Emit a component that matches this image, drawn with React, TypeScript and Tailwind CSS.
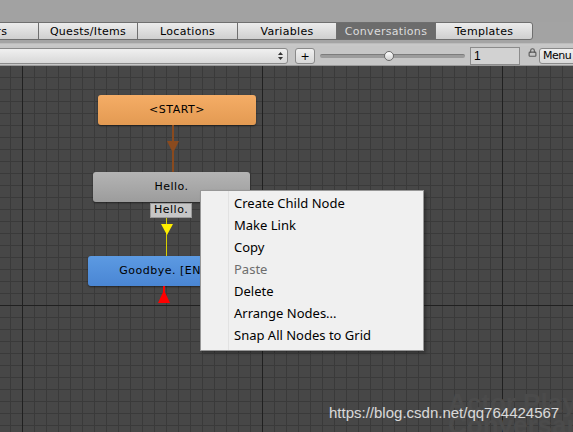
import { Lock } from "lucide-react";

const tabs = [
  { label: "Actors", w: "w-[100px]" },
  { label: "Quests/Items", w: "w-[100px]" },
  { label: "Locations", w: "w-[101px]" },
  { label: "Variables", w: "w-[100px]" },
  { label: "Conversations", w: "w-[100px]", active: true },
  { label: "Templates", w: "w-[98px]" },
];

const menuItems = [
  { label: "Create Child Node" },
  { label: "Make Link" },
  { label: "Copy" },
  { label: "Paste", disabled: true },
  { label: "Delete" },
  { label: "Arrange Nodes..." },
  { label: "Snap All Nodes to Grid" },
];

export default function App() {
  return (
    <div className="w-[573px] h-[432px] overflow-hidden flex flex-col bg-[#a3a3a3] font-['DejaVu_Sans',sans-serif] text-[11px] text-black">
      {/* window top */}
      <div className="h-[22px] shrink-0 bg-[#a2a2a2]" />

      {/* tab row */}
      <div className="h-[18px] shrink-0 flex -ml-[61px]">
        {tabs.map((t, i) => (
          <div
            key={t.label}
            className={`${t.w} shrink-0 flex items-center justify-center pt-[2px] border border-[#6f6f6f] ${i > 0 ? "-ml-px" : ""} ${
              t.active
                ? "bg-[#6c6c6c] text-[#dcdcdc] border-[#5a5a5a]"
                : "bg-[linear-gradient(#ececec,#cfcfcf)]"
            } ${i === tabs.length - 1 ? "rounded-r-[3px]" : ""}`}
          >
            <span className="tracking-[0.3px]">{t.label}</span>
          </div>
        ))}
      </div>

      {/* separator */}
      <div className="h-[3px] shrink-0 bg-[#a4a4a4]" />
      <div className="h-[1px] shrink-0 bg-[#bcbcbc]" />
      <div className="h-[2px] shrink-0 bg-[#c8c8c8]" />

      {/* toolbar */}
      <div className="h-[20px] shrink-0 overflow-hidden bg-[#c6c6c6] flex items-end pb-[1px] border-b border-[#9a9a9a]">
        <div className="w-[291px] h-[16px] shrink-0 -ml-[3px] rounded-[3px] border border-[#8a8a8a] bg-[linear-gradient(#f0f0f0,#d8d8d8)] flex items-center justify-end pr-[4px]">
          <svg width="5" height="8" viewBox="0 0 5 8">
            <polygon points="2.5,0 5,3 0,3" fill="#333" />
            <polygon points="0,5 5,5 2.5,8" fill="#333" />
          </svg>
        </div>
        <div className="ml-[7px] w-[20px] h-[16px] shrink-0 rounded-[3px] border border-[#8a8a8a] bg-[linear-gradient(#f0f0f0,#d8d8d8)] flex items-center justify-center text-[11px] leading-none">
          +
        </div>
        <div className="ml-[5px] w-[145px] h-[16px] shrink-0 relative flex items-center">
          <div className="w-full h-[4px] rounded-full bg-[#9c9c9c] border-t border-[#7c7c7c]" />
          <div className="absolute left-[64px] top-[3px] w-[10px] h-[10px] rounded-full border border-[#6a6a6a] bg-[linear-gradient(#ffffff,#d0d0d0)]" />
        </div>
        <div className="ml-[5px] w-[50px] h-[18px] shrink-0 -mb-[1px] border border-[#8c8c8c] bg-[#d2d2d2] flex items-center pl-[3px] font-['Liberation_Sans',sans-serif] text-[12px]">
          1
        </div>
        <Lock size={9} strokeWidth={3} className="ml-[8px] mb-[7px] shrink-0 text-[#5a5a5a]" />
        <div className="ml-[2px] h-[16px] pl-[3px] pr-[10px] shrink-0 rounded-[3px] border border-[#8a8a8a] bg-[linear-gradient(#f0f0f0,#d8d8d8)] flex items-center tracking-[-0.5px]">
          Menu
        </div>
      </div>

      {/* canvas */}
      <div className="relative flex-1 bg-[#474747] bg-[linear-gradient(to_right,#202020_1px,transparent_1px),linear-gradient(to_bottom,#202020_1px,transparent_1px),linear-gradient(to_right,#3a3a3a_1px,transparent_1px),linear-gradient(to_bottom,#3a3a3a_1px,transparent_1px)] [background-size:240px_240px,240px_240px,12px_12px,12px_12px] [background-position:22px_239px,22px_239px,10px_11px,10px_11px]">
        {/* START node */}
        <div className="absolute left-[98px] top-[29px] w-[158px] h-[30px] rounded-[3px] bg-[linear-gradient(#f5ad66,#e39a52)] shadow-[0_1px_2px_rgba(0,0,0,0.5)] flex items-center justify-center tracking-[0.5px]">
          &lt;START&gt;
        </div>

        {/* brown link */}
        <div className="absolute left-[172px] top-[59px] w-[2px] h-[47px] bg-[#8a4a1e]" />
        <svg className="absolute left-[167px] top-[75px]" width="12" height="12" viewBox="0 0 12 12">
          <polygon points="0,0 12,0 6,12" fill="#8a4a1e" />
        </svg>

        {/* Hello node */}
        <div className="absolute left-[93px] top-[106px] w-[157px] h-[30px] rounded-[3px] bg-[linear-gradient(#b4b4b4,#9c9c9c)] shadow-[0_1px_2px_rgba(0,0,0,0.5)] flex items-center justify-center tracking-[0.5px]">
          Hello.
        </div>

        {/* yellow link */}
        <div className="absolute left-[166px] top-[150px] w-[1px] h-[40px] bg-[#d8d000]" />
        <svg className="absolute left-[161px] top-[158px]" width="12" height="11" viewBox="0 0 12 11">
          <polygon points="0,0 12,0 6,11" fill="#ffee00" />
        </svg>
        <div className="absolute left-[150px] top-[137px] h-[15px] px-[3px] bg-[#c6c6c6] border border-[#9a9a9a] flex items-center tracking-[0.5px]">
          Hello.
        </div>

        {/* Goodbye node */}
        <div className="absolute left-[88px] top-[190px] w-[158px] h-[30px] rounded-[3px] bg-[linear-gradient(#5c9ae2,#4a86d4)] shadow-[0_1px_2px_rgba(0,0,0,0.5)] flex items-center justify-center tracking-[0.5px]">
          Goodbye. [END]
        </div>

        {/* red arrow */}
        <svg className="absolute left-[158px] top-[224px]" width="12" height="13" viewBox="0 0 12 13">
          <polygon points="6,0 12,13 0,13" fill="#ff0000" />
        </svg>
        <div className="absolute left-[163px] top-[220px] w-[2px] h-[6px] bg-[#ff0000]" />

        {/* context menu */}
        <div className="absolute left-[200px] top-[124px] w-[224px] h-[161px] bg-[#f0f0f0] border border-[#979797] shadow-[2px_2px_3px_rgba(0,0,0,0.3)] flex font-['Noto_Sans',sans-serif] text-[13px]">
          <div className="w-[28px] border-r border-[#e2e2e2] shrink-0" />
          <div className="flex flex-col pt-[1px] pl-[5px]">
            {menuItems.map((m) => (
              <div
                key={m.label}
                className={`h-[22px] flex items-center leading-none ${m.disabled ? "text-[#6d6d6d]" : "text-black"}`}
              >
                {m.label}
              </div>
            ))}
          </div>
        </div>

        {/* faint editor watermark */}
        <div className="absolute left-[448px] top-[326px] font-['Liberation_Sans',sans-serif] font-bold text-[26px] leading-[22px] text-[#4b4b4b] whitespace-nowrap">
          Actor Play
          <br />
          Conversant N
        </div>

        {/* blog watermark */}
        <div className="absolute left-[329px] top-[336px] font-['Liberation_Sans',sans-serif] text-[15px] text-white/80 whitespace-nowrap">
          https://blog.csdn.net/qq764424567
        </div>
      </div>
    </div>
  );
}
